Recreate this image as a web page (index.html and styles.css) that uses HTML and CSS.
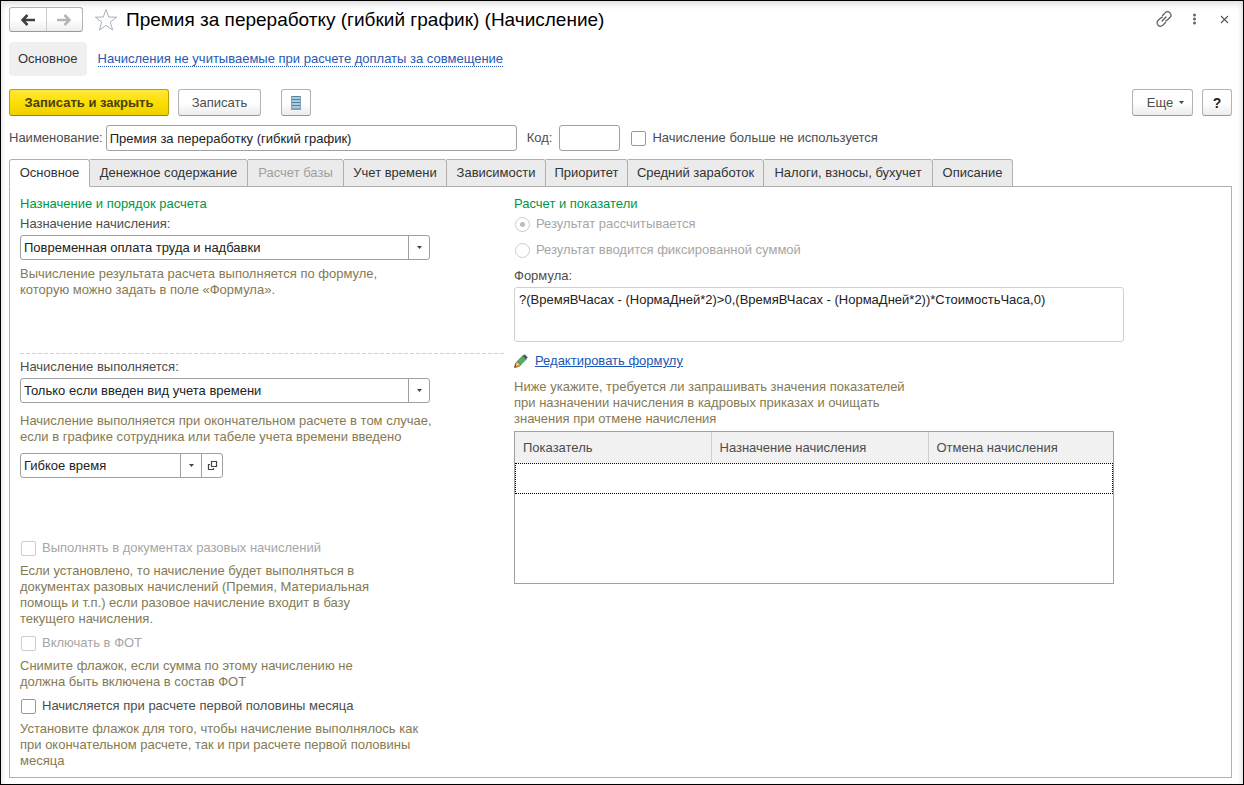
FILE: index.html
```html
<!DOCTYPE html>
<html lang="ru">
<head>
<meta charset="utf-8">
<meta name="viewport" content="width=device-width, initial-scale=1">
<title>Премия за переработку (гибкий график) (Начисление)</title>
<link rel="stylesheet" href="styles.css">
</head>
<body>
<main class="window">
  <header class="titlebar">
    <div class="history">
      <button class="history-btn" type="button" aria-label="Назад">
        <svg width="14" height="12" viewBox="0 0 14 12"><path d="M6.500 1L1.500 6l5 5M2 6h12" fill="none" stroke="#404040" stroke-width="2.600"/></svg>
      </button>
      <button class="history-btn" type="button" aria-label="Вперед">
        <svg width="14" height="12" viewBox="0 0 14 12"><path d="M7.500 1l5 5-5 5M12 6H0" fill="none" stroke="#b4b4b4" stroke-width="2.600"/></svg>
      </button>
    </div>
    <button class="plain-btn" type="button" aria-label="В избранное">
      <svg width="24" height="24" viewBox="0 0 24 24"><path d="M12 1.500l2.700 7.500 8 .2-6.400 4.900 2.300 7.900-6.600-4.700L5.400 22l2.300-7.900L1.300 9.200l8-.2z" fill="#fff" stroke="#a9b1ba"/></svg>
    </button>
    <h1 class="title">Премия за переработку (гибкий график) (Начисление)</h1>
    <div class="window-tools">
      <button class="plain-btn" type="button" aria-label="Получить ссылку">
        <svg width="16" height="16" viewBox="0 0 16 16"><g fill="none" stroke="#5c5c5c" stroke-width="1.200" stroke-linecap="round"><path d="M6.500 4.500l2.600-2.600c1.400-1.400 3.400-1.400 4.800-.1 1.400 1.400 1.400 3.300 0 4.700l-2.600 2.500c-.6.600-1.200.8-1.800.8"/><path d="M9.500 11.500l-2.600 2.600c-1.400 1.400-3.400 1.400-4.800.1-1.400-1.400-1.400-3.300 0-4.700l2.600-2.500c.6-.6 1.200-.8 1.800-.8"/><path d="M6 10l4-4"/></g></svg>
      </button>
      <button class="plain-btn" type="button" aria-label="Меню окна">
        <svg width="16" height="16" viewBox="0 0 16 16"><g fill="#666"><circle cx="8.500" cy="4" r="1.500"/><circle cx="8.500" cy="8" r="1.500"/><circle cx="8.500" cy="12" r="1.500"/></g></svg>
      </button>
      <button class="plain-btn" type="button" aria-label="Закрыть">
        <svg width="16" height="16" viewBox="0 0 16 16"><path d="M5 5l7 7m0-7l-7 7" stroke="#555" stroke-width="1.100"/></svg>
      </button>
    </div>
  </header>

  <nav class="sections">
    <a class="section-current" href="#main" aria-current="page">Основное</a>
    <a class="section-link" href="#related">Начисления не учитываемые при расчете доплаты за совмещение</a>
  </nav>

  <div class="commands">
    <button class="btn btn-primary" type="button">Записать и закрыть</button>
    <button class="btn btn-save" type="button">Записать</button>
    <button class="btn btn-icon btn-list" type="button" aria-label="Список">
      <svg width="12" height="16" viewBox="0 0 12 16"><rect x="1" y="1" width="10" height="14" fill="#a9cbe0"/><path d="M1 1.500h10M1 4.500h10M1 7.500h10M1 10.500h10M1 14h10" stroke="#567f9d" stroke-width="1.200"/><path d="M1.500 1v14M10.500 1v14" stroke="#7fa3bb"/></svg>
    </button>
    <button class="btn btn-more" type="button">Еще
      <svg width="5" height="3" viewBox="0 0 5 3"><path d="M0 0h5L2.500 3z" fill="#444"/></svg>
    </button>
    <button class="btn btn-icon btn-help" type="button" aria-label="Справка">?</button>
  </div>

  <div class="name-row">
    <label for="name">Наименование:</label>
    <input class="field name-field" id="name" type="text" value="Премия за переработку (гибкий график)">
    <label class="code-label" for="code">Код:</label>
    <input class="field code-field" id="code" type="text">
    <label class="check unused"><input class="box" type="checkbox">Начисление больше не используется</label>
  </div>

  <div class="tabs" role="tablist">
    <button class="tab tab-active" type="button" role="tab" aria-selected="true">Основное</button>
    <button class="tab" type="button" role="tab">Денежное содержание</button>
    <button class="tab" type="button" role="tab" disabled>Расчет базы</button>
    <button class="tab" type="button" role="tab">Учет времени</button>
    <button class="tab" type="button" role="tab">Зависимости</button>
    <button class="tab" type="button" role="tab">Приоритет</button>
    <button class="tab" type="button" role="tab">Средний заработок</button>
    <button class="tab" type="button" role="tab">Налоги, взносы, бухучет</button>
    <button class="tab" type="button" role="tab">Описание</button>
  </div>

  <section class="panel" role="tabpanel">
    <div class="column">
      <div class="purpose">
        <h2 class="heading">Назначение и порядок расчета</h2>
        <label class="label" for="purpose">Назначение начисления:</label>
        <div class="combo">
          <select class="combo-select" id="purpose"><option>Повременная оплата труда и надбавки</option></select>
          <span class="combo-arrow"><svg width="5" height="3" viewBox="0 0 5 3"><path d="M0 0h5L2.500 3z" fill="#444"/></svg></span>
        </div>
        <p class="hint hint-purpose">Вычисление результата расчета выполняется по формуле,<br>которую можно задать в поле «Формула».</p>
      </div>
      <div class="execution">
        <label class="label" for="when">Начисление выполняется:</label>
        <div class="combo">
          <select class="combo-select" id="when"><option>Только если введен вид учета времени</option></select>
          <span class="combo-arrow"><svg width="5" height="3" viewBox="0 0 5 3"><path d="M0 0h5L2.500 3z" fill="#444"/></svg></span>
        </div>
        <p class="hint hint-time">Начисление выполняется при окончательном расчете в том случае,<br>если в графике сотрудника или табеле учета времени введено</p>
        <div class="combo combo-open">
          <select class="combo-select" aria-label="Вид учета времени"><option>Гибкое время</option></select>
          <span class="combo-arrow"><svg width="5" height="3" viewBox="0 0 5 3"><path d="M0 0h5L2.500 3z" fill="#444"/></svg></span>
          <button class="open-btn" type="button" aria-label="Открыть">
            <svg width="11" height="11" viewBox="0 0 11 11"><path d="M4.500 1.500h5v5h-5zM3 4.500H1.500v5h5V8" fill="none" stroke="#444" stroke-width="1.200"/></svg>
          </button>
        </div>
      </div>
      <div class="flags">
        <label class="check disabled"><input class="box" type="checkbox" disabled>Выполнять в документах разовых начислений</label>
        <p class="hint">Если установлено, то начисление будет выполняться в<br>документах разовых начислений (Премия, Материальная<br>помощь и т.п.) если разовое начисление входит в базу<br>текущего начисления.</p>
        <label class="check disabled"><input class="box" type="checkbox" disabled>Включать в ФОТ</label>
        <p class="hint">Снимите флажок, если сумма по этому начислению не<br>должна быть включена в состав ФОТ</p>
        <label class="check"><input class="box" type="checkbox">Начисляется при расчете первой половины месяца</label>
        <p class="hint">Установите флажок для того, чтобы начисление выполнялось как<br>при окончательном расчете, так и при расчете первой половины<br>месяца</p>
      </div>
    </div>

    <div class="column">
      <h2 class="heading">Расчет и показатели</h2>
      <div class="radios">
        <label class="check disabled"><input class="box radio" type="radio" name="result" checked disabled>Результат рассчитывается</label>
        <label class="check disabled"><input class="box radio" type="radio" name="result" disabled>Результат вводится фиксированной суммой</label>
      </div>
      <label for="formula">Формула:</label>
      <textarea class="formula" id="formula" readonly>?(ВремяВЧасах - (НормаДней*2)&gt;0,(ВремяВЧасах - (НормаДней*2))*СтоимостьЧаса,0)</textarea>
      <div class="edit">
        <svg width="14" height="14" viewBox="0 0 14 14"><path d="M0.500 13.500l1-4 3 3z" fill="#59483c"/><path d="M1.500 9.500l2-2.500 4 4-2.500 2-3-.5z" fill="#efb65b"/><path d="M3.200 7.400L8.800 1.800l3.400 3.400-5.600 5.600z" fill="#4fb063" stroke="#31804a" stroke-width=".8"/><path d="M8.800 2L10.500.3l3.300 3.300L12 5.300z" fill="#46555d"/><path d="M.5 13.500l1-4 1.700-2M.5 13.500l4.200-1 1.900-1.700" fill="none" stroke="#7a5630" stroke-width=".8"/></svg>
        <a class="edit-link" href="#formula">Редактировать формулу</a>
      </div>
      <p class="hint">Ниже укажите, требуется ли запрашивать значения показателей<br>при назначении начисления в кадровых приказах и очищать<br>значения при отмене начисления</p>
      <div class="grid">
        <table class="table">
          <thead><tr><th class="col-name">Показатель</th><th class="col-assign">Назначение начисления</th><th>Отмена начисления</th></tr></thead>
          <tbody><tr class="row-current"><td colspan="3"></td></tr></tbody>
        </table>
      </div>
    </div>
  </section>
</main>
</body>
</html>
```
FILE: styles.css
```css
* { box-sizing: border-box; }

body {
  margin: 0;
  background: #fff;
  color: #4d4d4d;
  font: 13px/16px "Liberation Sans", Arial, sans-serif;
}

button, input, select, textarea { font: inherit; color: inherit; }
svg { display: block; flex: none; }
h1, h2, p { margin: 0; font-weight: normal; }

.window {
  display: flex;
  flex-direction: column;
  min-height: 100vh;
  padding: 6px 11px 6px 8px;
  border: 1px solid #000;
  box-shadow: inset 0 6px 6px -3px #ddd, inset -4px 0 4px -2px #e4e4e4, inset 4px 0 4px -2px #eee;
}

.titlebar { display: flex; align-items: center; height: 25px; }
.history {
  display: flex;
  width: 74px;
  height: 25px;
  margin-right: 11px;
  border: 1px solid #b3b3b3;
  border-bottom-color: #999;
  border-radius: 3px;
  background: linear-gradient(#fff, #fff 50%, #ececec);
}
.history-btn {
  display: flex;
  flex: 1;
  align-items: center;
  justify-content: center;
  padding: 0;
  border: 0;
  background: none;
}
.history-btn + .history-btn { border-left: 1px solid #ccc; }
.plain-btn { padding: 0; border: 0; background: none; }
.title { margin-left: 8px; color: #000; font-size: 19px; line-height: 24px; }
.window-tools { display: flex; gap: 14px; margin-left: auto; padding-bottom: 2px; }

.sections { display: flex; align-items: center; gap: 11px; margin-top: 10px; }
.section-current {
  padding: 9px;
  border-radius: 4px;
  background: #f0f0f0;
  color: #333;
  text-decoration: none;
}
.section-link { border-bottom: 1px dotted #2659b5; color: #2659b5; line-height: 14px; text-decoration: none; }

.commands { display: flex; margin-top: 13px; }
.btn {
  display: flex;
  align-items: center;
  justify-content: center;
  height: 27px;
  padding: 0 12px;
  border: 1px solid #b3b3b3;
  border-bottom-color: #999;
  border-radius: 3px;
  background: linear-gradient(#fff, #fff 50%, #ececec);
}
.btn-primary {
  width: 160px;
  margin-right: 9px;
  border-color: #bfa000;
  border-bottom-color: #9c8500;
  background: linear-gradient(#ffe83c, #fbdf00 50%, #efd000);
  color: #4a4010;
  font-weight: bold;
}
.btn-save { width: 83px; }
.btn-icon { width: 30px; padding: 0; }
.btn-list { margin-left: 20px; }
.btn-more { gap: 6px; width: 61px; margin-left: auto; padding: 0 6px 0 12px; }
.btn-help { margin-left: 9px; color: #222; font-size: 14px; font-weight: bold; }

.name-row { display: flex; align-items: center; margin-top: 9px; }
.field {
  height: 26px;
  padding: 0 3px;
  border: 1px solid #a0a0a0;
  border-radius: 3px;
  background: #fff;
  color: #222;
}
.name-field { width: 411px; margin-left: 3px; }
.code-label { margin-left: 10px; }
.code-field { width: 61px; margin-left: 7px; }
.unused { margin-left: 10px; }

.check { display: flex; align-items: center; gap: 6px; padding-left: 1px; }
.disabled { color: #a6a6a6; }
.box {
  flex: none;
  width: 15px;
  height: 15px;
  margin: 0;
  border: 1px solid #999;
  border-radius: 2px;
  background: #fff;
  appearance: none;
}
.box:disabled { border-color: #ccc; }
.radio { border-radius: 50%; }
.radio:checked { background: radial-gradient(circle, #bdbdbd 2px, #fff 3px); }

.tabs {
  display: grid;
  grid-template-columns: 81px 158px 96px 103px 99px 82px 136px 169px 80px;
  margin-top: 8px;
}
.tab {
  height: 28px;
  padding: 0;
  border: 1px solid #b0b0b0;
  border-left-width: 0;
  border-radius: 0 3px 0 0;
  background: #ebebeb;
  color: #333;
  white-space: nowrap;
}
.tab:disabled { color: #a0a0a0; }
/* Keeps the active tab joined to the panel below it. */
.tab-active {
  z-index: 1;
  border-left-width: 1px;
  border-bottom-color: #fff;
  border-radius: 3px 3px 0 0;
  background: #fff;
}

.panel {
  display: grid;
  flex: 1;
  grid-template-columns: minmax(0, 484px) minmax(0, 610px);
  gap: 10px;
  margin-top: -1px;
  padding: 9px 10px 8px;
  border: 1px solid #b0b0b0;
}

.column { display: flex; flex-direction: column; }
.heading { color: #009646; font-size: 13px; line-height: 16px; }
.hint { color: #857a54; }
.label { margin-bottom: 3px; }

.purpose {
  display: flex;
  flex-direction: column;
  min-height: 157px;
}
.purpose .heading { margin-bottom: 4px; }
.hint-purpose { margin-top: 6px; }
.execution {
  display: flex;
  flex-direction: column;
  min-height: 187px;
  padding-top: 6px;
  background: repeating-linear-gradient(90deg, #d0d0d0 0 4px, transparent 4px 6px) top / 100% 1px no-repeat;
}
.hint-time { margin: 10px 0 8px; }

.combo {
  display: grid;
  grid-template-columns: 1fr 21px;
  width: 410px;
  height: 25px;
  border: 1px solid #a0a0a0;
  border-radius: 3px;
}
.combo-open { grid-template-columns: 1fr 21px 21px; width: 203px; }
.combo-select {
  grid-area: 1 / 1 / 2 / 3;
  padding: 0 3px;
  border: 0;
  background: none;
  color: #222;
  appearance: none;
}
.combo-arrow {
  display: flex;
  grid-area: 1 / 2;
  align-items: center;
  justify-content: center;
  border-left: 1px solid #a0a0a0;
  pointer-events: none;
}
.open-btn {
  display: flex;
  align-items: center;
  justify-content: center;
  padding: 0;
  border: 0;
  border-left: 1px solid #a0a0a0;
  background: none;
}

.flags { display: flex; flex-direction: column; gap: 7px; }
.flags .hint + .check { margin-top: 1px; }

.radios { display: flex; flex-direction: column; gap: 10px; margin: 4px 0 10px; }
.formula {
  height: 55px;
  margin-top: 3px;
  padding: 4px;
  border: 1px solid #d0d0d0;
  border-radius: 3px;
  color: #222;
  resize: none;
}
.edit { display: flex; align-items: center; gap: 7px; margin: 11px 0 10px; }
.edit-link { color: #1a56b8; }

.grid {
  max-width: 600px;
  min-height: 153px;
  margin-top: 4px;
  border: 1px solid #a0a0a0;
}
.table { width: 100%; border-collapse: collapse; table-layout: fixed; }
.table th {
  height: 31px;
  padding: 0 8px;
  border-left: 1px solid #d0d0d0;
  background: #f1f1f1;
  font-weight: normal;
  text-align: left;
}
.table th:first-child { border-left: 0; }
.col-name { width: 196px; }
.col-assign { width: 217px; }
.row-current td { height: 31px; padding: 0; outline: 1px dotted #000; outline-offset: -1px; }
```
